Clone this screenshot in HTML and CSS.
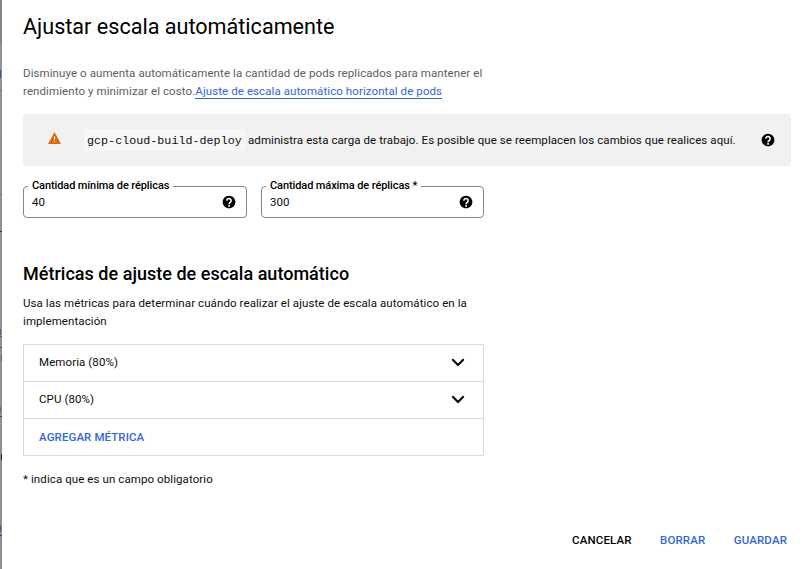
FILE: index.html
```html
<!DOCTYPE html>
<html lang="es">
<head>
<meta charset="utf-8">
<title>Ajustar escala automáticamente</title>
<link rel="stylesheet" href="styles.css">
</head>
<body>
<svg class="defs" width="0" height="0" aria-hidden="true">
  <symbol id="help" viewBox="1 1 22 22"><path d="M12 2C6.480 2 2 6.480 2 12s4.480 10 10 10 10-4.480 10-10S17.520 2 12 2z" fill="#000"/><path d="M8.700 10a3.300 3.300 0 1 1 5.600 2.200c-1.300 1.200-2.200 1.500-2.200 3.300" fill="none" stroke="#fff" stroke-width="2.500"/><path d="M10.800 16.700h2.600v2.600h-2.600z" fill="#fff"/></symbol>
  <symbol id="chevron" viewBox="0 0 14 9"><path d="M1.300 1.200 7 7l5.700-5.800" fill="none" stroke="#000" stroke-width="2"/></symbol>
</svg>
<div class="backdrop"></div>
<main class="panel">
  <h1>Ajustar escala automáticamente</h1>
  <p class="intro">Disminuye o aumenta automáticamente la cantidad de pods replicados para mantener el<br>rendimiento y minimizar el costo.<a>Ajuste de escala automático horizontal de pods</a></p>
  <section class="notice">
    <svg class="warning" viewBox="0 0 13 12"><path d="M6.500 0 13 12H0z" fill="#dd6b0d"/><path d="M5.900 4.600h1.200v3.200H5.900zM5.900 8.900h1.200v1.200H5.900z" fill="#fff"/></svg>
    <code>gcp-cloud-build-deploy</code>
    <span class="notice-text">administra esta carga de trabajo. Es posible que se reemplacen los cambios que realices aquí.</span>
    <svg class="help"><use href="#help"/></svg>
  </section>
  <div class="fields">
    <fieldset class="min"><legend>Cantidad mínima de réplicas</legend><div class="value"><span>40</span><svg class="help"><use href="#help"/></svg></div></fieldset>
    <fieldset class="max"><legend>Cantidad máxima de réplicas *</legend><div class="value"><span>300</span><svg class="help"><use href="#help"/></svg></div></fieldset>
  </div>
  <h2>Métricas de ajuste de escala automático</h2>
  <p class="desc">Usa las métricas para determinar cuándo realizar el ajuste de escala automático en la<br>implementación</p>
  <div class="metrics">
    <div class="row"><span>Memoria (80%)</span><svg class="chevron"><use href="#chevron"/></svg></div>
    <div class="row"><span>CPU (80%)</span><svg class="chevron"><use href="#chevron"/></svg></div>
    <div class="row add">AGREGAR MÉTRICA</div>
  </div>
  <p class="required">* indica que es un campo obligatorio</p>
  <footer><span class="cancel">CANCELAR</span><span>BORRAR</span><span>GUARDAR</span></footer>
</main>
</body>
</html>
```
FILE: styles.css
```css
* { box-sizing: border-box; }
body { margin: 0; width: 806px; height: 569px; display: flex; overflow: hidden; background: #fff; color: #0d0d0d; font: 11.5px/18px Roboto, sans-serif; letter-spacing: .09px; }
h1, h2, p { margin: 0; white-space: nowrap; }
svg { display: block; flex: none; }
.defs { position: absolute; }
.backdrop {
  width: 2px; flex: none;
  background:
    linear-gradient(#2c5c92, #2c5c92) 0 70px / 1px 8px no-repeat,
    linear-gradient(#7a7a7a, #7a7a7a) 0 90px / 2px 1px no-repeat,
    linear-gradient(#7a7a7a, #7a7a7a) 0 194px / 2px 1px no-repeat,
    linear-gradient(#6b1537, #6b1537) 0 231px / 2px 1px no-repeat,
    linear-gradient(#4668a4, #4668a4) 0 329px / 1px 6px no-repeat,
    linear-gradient(#287c35, #287c35) 0 336px / 2px 1px no-repeat,
    linear-gradient(#555, #555) 0 347px / 2px 1px no-repeat,
    linear-gradient(#606060, #606060) 1px 355px / 1px 6px no-repeat,
    linear-gradient(#526da3, #526da3) 0 407px / 1px 5px no-repeat,
    linear-gradient(#244f9b, #244f9b) 0 416px / 2px 1px no-repeat,
    linear-gradient(#222, #222) 1px 454px / 1px 6px no-repeat,
    linear-gradient(#3f5f9f, #3f5f9f) 0 525px / 1px 7px no-repeat,
    linear-gradient(#233f7f, #233f7f) 0 535px / 2px 1px no-repeat,
    linear-gradient(#858585, #858585 43px, #929292 44px, #8f8f8f);
}
.panel { flex: 1; padding: 10px 15px 0 21px; display: flex; flex-direction: column; }
h1 { font-size: 21.6px; line-height: 34px; font-weight: 400; letter-spacing: 0; color: #000; }
.intro { margin-top: 20px; color: #5d5d5d; }
.intro a { color: #3367d6; border-bottom: 1px solid #3367d6; padding-bottom: 0; }
.notice { margin-top: 14px; height: 52px; border-radius: 3px; background: #f1f1f1; display: flex; align-items: center; padding: 0 16px 0 25px; white-space: nowrap; }
.warning { width: 13px; height: 12px; margin: -5px 23px 0 0; }
code { width: 161px; height: 22px; padding-left: 3px; border-radius: 2px; background: #f7f7f7; font: 11.700px/25px "Liberation Mono", monospace; letter-spacing: .02px; }
.notice-text { margin-left: 3px; letter-spacing: .08px; }
.help { width: 14px; height: 14px; margin-left: auto; }
.fields { display: flex; gap: 14px; margin-top: 14px; }
fieldset { margin: 0; min-width: 0; width: 224px; height: 38px; border: 1px solid #80868b; border-radius: 4px; padding: 0 10px 0 8px; }
.max { width: 223px; }
legend { margin-left: -4px; padding: 0 3.5px 0 4px; height: 12px; line-height: 12px; font-size: 11px; font-weight: 500; letter-spacing: -.1px; color: #000; white-space: nowrap; }
.value { height: 20px; display: flex; align-items: center; }
h2 { margin-top: 45px; font-size: 18px; line-height: 22px; font-weight: 500; letter-spacing: .02px; color: #000; }
.desc { margin-top: 9px; }
.metrics { width: 461px; margin-top: 14px; border: 1px solid #dadada; }
.row { height: 37px; display: flex; align-items: center; justify-content: space-between; padding: 0 18px 2px 15px; border-bottom: 1px solid #dadada; }
.row:last-child { height: 36px; border-bottom: 0; padding-bottom: 0; }
.add { color: #3367d6; font-weight: 500; }
.chevron { width: 14px; height: 9px; margin-top: 1px; }
.required { margin-top: 14px; }
footer { margin-top: 43px; padding-right: 4px; display: flex; justify-content: flex-end; gap: 28.5px; color: #3367d6; font-weight: 500; font-size: 11.5px; letter-spacing: .12px; }
.cancel { color: #000; }
```
